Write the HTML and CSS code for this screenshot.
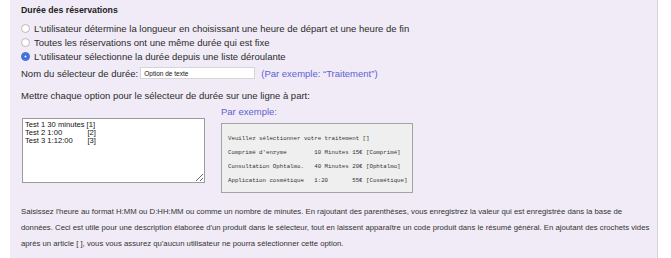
FILE: index.html
```html
<!DOCTYPE html>
<html lang="fr">
<head>
    <meta charset="UTF-8">
    <meta name="viewport" content="width=device-width, initial-scale=1.0">
    <title>Durée des réservations</title>
    <link rel="stylesheet" href="styles.css">
</head>
<body>
    <div class="panel">
        <h3 class="section-title">Durée des réservations</h3>

        <div class="options">
            <label class="option"><input type="radio" name="mode"> L'utilisateur détermine la longueur en choisissant une heure de départ et une heure de fin</label>
            <label class="option"><input type="radio" name="mode"> Toutes les réservations ont une même durée qui est fixe</label>
            <label class="option"><input type="radio" name="mode" checked> L'utilisateur sélectionne la durée depuis une liste déroulante</label>
        </div>

        <div class="name-row">
            <label for="selectorName">Nom du sélecteur de durée:</label>
            <input type="text" id="selectorName" name="selectorName" value="Option de texte">
            <span class="hint">(Par exemple: “Traitement”)</span>
        </div>

        <p class="intro">Mettre chaque option pour le sélecteur de durée sur une ligne à part:</p>

        <div class="editor">
            <textarea id="durationOptions" name="durationOptions">Test 1 30 minutes [1]
Test 2 1:00            [2]
Test 3 1:12:00       [3]</textarea>

            <div class="example">
                <div class="hint example-title">Par exemple:</div>
                <pre class="example-box">Veuillez sélectionner votre traitement []
Comprimé d'enzyme        10 Minutes 15€ [Comprimé]
Consultation Ophtalmo.   40 Minutes 20€ [Ophtalmo]
Application cosmétique   1:20       55€ [Cosmétique]</pre>
            </div>
        </div>

        <p class="help">Saisissez l'heure au format H:MM ou D:HH:MM ou comme un nombre de minutes. En rajoutant des parenthèses, vous enregistrez la valeur qui est enregistrée dans la base de données. Ceci est utile pour une description élaborée d'un produit dans le sélecteur, tout en laissent apparaître un code produit dans le résumé général. En ajoutant des crochets vides après un article [ ], vous vous assurez qu'aucun utilisateur ne pourra sélectionner cette option.</p>
    </div>
</body>
</html>
```

FILE: styles.css
```css
body {
    font-family: "Liberation Sans", Arial, sans-serif;
    margin: 0;
    padding: 0;
    background-color: white;
    color: #2b2b2b;
}

.panel {
    margin-left: 10px;
    width: 648px;
    height: 258px;
    padding: 4px 0 0 11px;
    background-color: #f0ebf6;
    border-right: 1px solid #d9d1e2;
    box-sizing: border-box;
}

.section-title {
    margin: 0 0 5px;
    font-size: 8.75px;
    line-height: 12px;
    font-weight: bold;
    color: #222;
}

.option {
    display: flex;
    align-items: center;
    height: 14px;
    font-size: 9.5px;
}

.option input {
    appearance: none;
    width: 9px;
    height: 9px;
    margin: 0 4px 0 0;
    border: 1px solid #b9b9b9;
    border-radius: 50%;
    background-color: white;
    box-sizing: border-box;
}

.option input:checked {
    border-color: #3a6fd8;
    background-color: #3a6fd8;
    box-shadow: inset 0 0 0 2.5px #3a6fd8, inset 0 0 0 5px white;
}

.name-row {
    display: flex;
    align-items: center;
    height: 16px;
    margin-top: 2px;
    font-size: 9.5px;
}

.name-row input {
    width: 115px;
    height: 12px;
    margin: 0 6px 0 2px;
    padding: 0 3px;
    border: 1px solid #d6d6d6;
    font-family: "Liberation Sans", Arial, sans-serif;
    font-size: 6.5px;
    color: #111;
    box-sizing: border-box;
}

.hint {
    color: #5f5fd3;
}

.intro {
    margin: 8px 0 0;
    font-size: 9.5px;
    line-height: 14px;
}

.editor {
    display: flex;
    align-items: flex-start;
    gap: 16px;
    margin-top: 2px;
}

.editor textarea {
    width: 183px;
    height: 65px;
    margin: 13px 0 0 1px;
    padding: 2px 2px;
    border: 1px solid #9b9b9b;
    font-family: "Liberation Sans", Arial, sans-serif;
    font-size: 7.6px;
    line-height: 7.8px;
    color: #111;
    box-sizing: border-box;
    resize: vertical;
}

.example-title {
    font-size: 9.5px;
    line-height: 14px;
}

.example-box {
    width: 192px;
    height: 70px;
    margin: 4px 0 0;
    padding: 8px 0 0 6px;
    background-color: #efefef;
    border: 1px solid #a3a3a3;
    font-family: "Liberation Mono", "Courier New", monospace;
    font-size: 5.75px;
    line-height: 14px;
    color: #333;
    box-sizing: border-box;
}

.help {
    margin: 11px 0 0;
    width: 630px;
    font-size: 7.75px;
    line-height: 16px;
    color: #333;
}
```
